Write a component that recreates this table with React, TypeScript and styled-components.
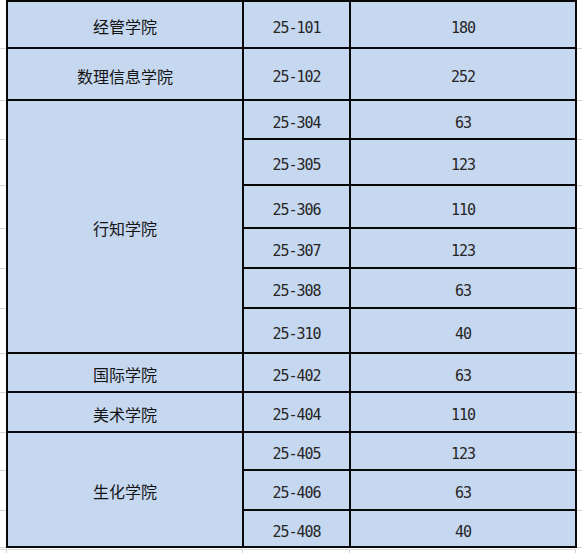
import React from "react";
import styled, { createGlobalStyle } from "styled-components";

const GlobalStyle = createGlobalStyle`
  html, body { margin: 0; padding: 0; background: #ffffff; }
  body { width: 582px; height: 553px; overflow: hidden; }
`;

const ROWS = [45, 50, 37, 44, 41, 38, 38, 43, 37, 38, 36, 38, 35];
const TABLE_ROWS = ROWS.map((h) => `${h}px`).join(" ");
const GUTTER_ROWS = ROWS.map((h) => `${h + 2}px`).join(" ");

type Room = { code: string; count: string };
type Dept = { name: string; rooms: Room[] };

const DATA: Dept[] = [
  { name: "经管学院", rooms: [{ code: "25-101", count: "180" }] },
  { name: "数理信息学院", rooms: [{ code: "25-102", count: "252" }] },
  {
    name: "行知学院",
    rooms: [
      { code: "25-304", count: "63" },
      { code: "25-305", count: "123" },
      { code: "25-306", count: "110" },
      { code: "25-307", count: "123" },
      { code: "25-308", count: "63" },
      { code: "25-310", count: "40" },
    ],
  },
  { name: "国际学院", rooms: [{ code: "25-402", count: "63" }] },
  { name: "美术学院", rooms: [{ code: "25-404", count: "110" }] },
  {
    name: "生化学院",
    rooms: [
      { code: "25-405", count: "123" },
      { code: "25-406", count: "63" },
      { code: "25-408", count: "40" },
    ],
  },
];

const Sheet = styled.div`
  width: 582px;
  height: 553px;
  display: grid;
  grid-template-columns: 6px 571px 5px;
  grid-template-rows: 548px 5px;
  background: #ffffff;
`;

const Gutter = styled.div`
  display: grid;
  grid-template-rows: ${GUTTER_ROWS};
  padding-top: 2px;
  box-sizing: border-box;
`;

const GutterCell = styled.div`
  border-bottom: 1px solid #d6d6d6;
  box-sizing: border-box;
`;

const Table = styled.div`
  display: grid;
  grid-template-columns: 234px 105px 224px;
  grid-template-rows: ${TABLE_ROWS};
  gap: 2px;
  padding: 2px;
  background: #080808;
`;

const Cell = styled.div<{ $span?: number; $mono?: boolean }>`
  grid-row: span ${(p) => p.$span ?? 1};
  background: #c6d8f0;
  display: flex;
  align-items: center;
  justify-content: center;
  padding-top: ${(p) => (p.$mono ? 7 : 3)}px;
  box-sizing: border-box;
  color: ${(p) => (p.$mono ? "#262626" : "#141414")};
  font-family: ${(p) =>
    p.$mono
      ? `"DejaVu Sans Mono", "Liberation Mono", monospace`
      : `"Noto Sans CJK SC", "Noto Sans", sans-serif`};
  font-size: ${(p) => (p.$mono ? 15 : 16)}px;
  letter-spacing: ${(p) => (p.$mono ? "-1px" : "0")};
  font-weight: 400;
  line-height: 1;
  white-space: nowrap;
`;

const BottomStrip = styled.div`
  grid-column: 1 / -1;
  display: grid;
  grid-template-columns: 7px 236px 107px 226px 6px;
  border-top: 1px solid #ffffff;
  box-sizing: border-box;
`;

const BottomCell = styled.div`
  border-right: 1px solid #d6d6d6;
  border-top: 1px solid #dcdcdc;
  box-sizing: border-box;
`;

export default function App() {
  return (
    <>
      <GlobalStyle />
      <Sheet>
        <Gutter>
          {ROWS.map((_, i) => (
            <GutterCell key={i} />
          ))}
        </Gutter>
        <Table>
          {DATA.map((dept) =>
            dept.rooms.map((room, i) => (
              <React.Fragment key={room.code}>
                {i === 0 && <Cell $span={dept.rooms.length}>{dept.name}</Cell>}
                <Cell $mono>{room.code}</Cell>
                <Cell $mono>{room.count}</Cell>
              </React.Fragment>
            ))
          )}
        </Table>
        <Gutter>
          {ROWS.map((_, i) => (
            <GutterCell key={i} />
          ))}
        </Gutter>
        <BottomStrip>
          <BottomCell />
          <BottomCell />
          <BottomCell />
          <BottomCell />
          <div />
        </BottomStrip>
      </Sheet>
    </>
  );
}
